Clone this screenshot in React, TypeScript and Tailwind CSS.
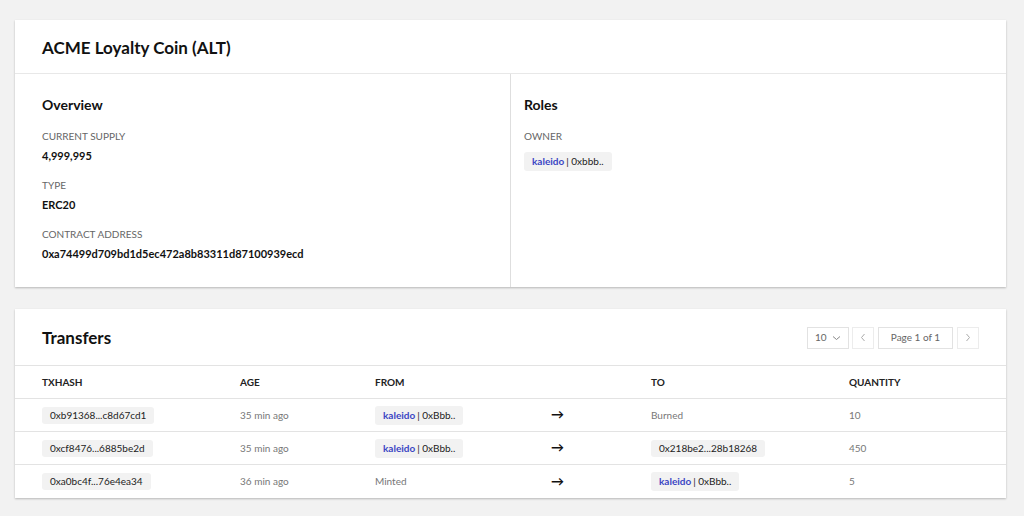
import React from "react";

const font = { fontFamily: "Lato, 'Noto Sans', sans-serif" };

const transfers = [
  { hash: "0xb91368...c8d67cd1", age: "35 min ago", from: "kaleido", to: "Burned", qty: "10" },
  { hash: "0xcf8476...6885be2d", age: "35 min ago", from: "kaleido", to: "0x218be2...28b18268", qty: "450" },
  { hash: "0xa0bc4f...76e4ea34", age: "36 min ago", from: "Minted", to: "kaleido", qty: "5" },
];

const Chip = ({ children }: { children: React.ReactNode }) => (
  <span className="inline-flex items-center h-[17px] px-[8px] rounded-[3px] bg-[#f2f2f2] text-[10px] text-[#222]">
    {children}
  </span>
);

const Identity = ({ short }: { short: string }) => (
  <span className="inline-flex items-center h-[19px] px-[8px] rounded-[3px] bg-[#f2f2f2] text-[10px] text-[#222]">
    <span className="text-[#3b46c4] font-bold">kaleido</span>
    <span className="ml-[2px]">| {short}</span>
  </span>
);

const Field = ({ label, value }: { label: string; value: string }) => (
  <div className="mb-[15px]">
    <div className="text-[10px] text-[#666] leading-[14px] uppercase">{label}</div>
    <div className="mt-[6px] text-[11px] font-bold text-[#111] leading-[14px]">{value}</div>
  </div>
);

const Cell = ({ className = "", children }: { className?: string; children: React.ReactNode }) => (
  <div className={`flex items-center ${className}`}>{children}</div>
);

export default function App() {
  return (
    <div className="min-h-screen bg-[#f2f2f2] pl-[15px] pr-[18px] pt-[20px] pb-[16px]" style={font}>
      {/* Token card */}
      <div className="bg-white shadow-[0_1px_2px_rgba(0,0,0,0.25)]">
        <div className="h-[54px] flex items-center px-[27px] border-b border-[#e8e8e8]">
          <h1 className="text-[17px] font-bold text-[#111] mt-[2px]">ACME Loyalty Coin (ALT)</h1>
        </div>
        <div className="grid grid-cols-[496px_1fr] h-[213px]">
          <div className="border-r border-[#dedede] px-[27px] pt-[22px]">
            <h2 className="text-[14px] font-bold text-[#111] leading-[18px] mb-[15px]">Overview</h2>
            <Field label="Current Supply" value="4,999,995" />
            <Field label="Type" value="ERC20" />
            <Field label="Contract Address" value="0xa74499d709bd1d5ec472a8b83311d87100939ecd" />
          </div>
          <div className="px-[13px] pt-[22px]">
            <h2 className="text-[14px] font-bold text-[#111] leading-[18px] mb-[15px]">Roles</h2>
            <div className="text-[10px] text-[#666] leading-[14px]">OWNER</div>
            <div className="mt-[4px]">
              <Identity short="0xbbb.." />
            </div>
          </div>
        </div>
      </div>

      {/* Transfers card */}
      <div className="mt-[22px] bg-white shadow-[0_1px_2px_rgba(0,0,0,0.25)]">
        <div className="h-[57px] flex items-center justify-between pl-[27px] pr-[27px] border-b border-[#e3e3e3]">
          <h2 className="text-[17px] font-bold text-[#111] mt-[2px]">Transfers</h2>
          <div className="flex items-center gap-[3px] text-[10px] text-[#666] mt-[1px]">
            <div className="w-[42px] h-[22px] border border-[#e2e2e2] flex items-center justify-between px-[7px]">
              <span>10</span>
              <svg width="9" height="6" viewBox="0 0 9 6" fill="none" stroke="#888" strokeWidth="1">
                <path d="M1 1.5l3.5 3 3.5-3" />
              </svg>
            </div>
            <div className="w-[22px] h-[22px] border border-[#ececec] flex items-center justify-center">
              <svg width="6" height="9" viewBox="0 0 6 9" fill="none" stroke="#aaa" strokeWidth="1">
                <path d="M4.5 1L1.5 4.5 4.5 8" />
              </svg>
            </div>
            <div className="w-[75px] h-[22px] border border-[#e2e2e2] flex items-center justify-center ml-[1px]">
              Page 1 of 1
            </div>
            <div className="w-[22px] h-[22px] border border-[#ececec] flex items-center justify-center ml-[1px]">
              <svg width="6" height="9" viewBox="0 0 6 9" fill="none" stroke="#aaa" strokeWidth="1">
                <path d="M1.5 1l3 3.5-3 3.5" />
              </svg>
            </div>
          </div>
        </div>
        <div className="grid grid-cols-[198px_135px_176px_100px_198px_1fr] pl-[27px] h-[33px] border-b border-[#e3e3e3] text-[10px] font-bold text-[#222]">
          <Cell>TXHASH</Cell>
          <Cell>AGE</Cell>
          <Cell>FROM</Cell>
          <Cell>{""}</Cell>
          <Cell>TO</Cell>
          <Cell>QUANTITY</Cell>
        </div>
        {transfers.map((t, i) => (
          <div
            key={t.hash}
            className={`grid grid-cols-[198px_135px_176px_100px_198px_1fr] pl-[27px] h-[33px] text-[10px] text-[#777] ${
              i < transfers.length - 1 ? "border-b border-[#e3e3e3]" : ""
            }`}
          >
            <Cell>
              <Chip>{t.hash}</Chip>
            </Cell>
            <Cell>{t.age}</Cell>
            <Cell>{t.from === "kaleido" ? <Identity short="0xBbb.." /> : t.from}</Cell>
            <Cell className="text-[13px] font-bold text-[#111]">→</Cell>
            <Cell>
              {t.to === "kaleido" ? (
                <Identity short="0xBbb.." />
              ) : t.to.startsWith("0x") ? (
                <Chip>{t.to}</Chip>
              ) : (
                t.to
              )}
            </Cell>
            <Cell>{t.qty}</Cell>
          </div>
        ))}
      </div>
    </div>
  );
}
